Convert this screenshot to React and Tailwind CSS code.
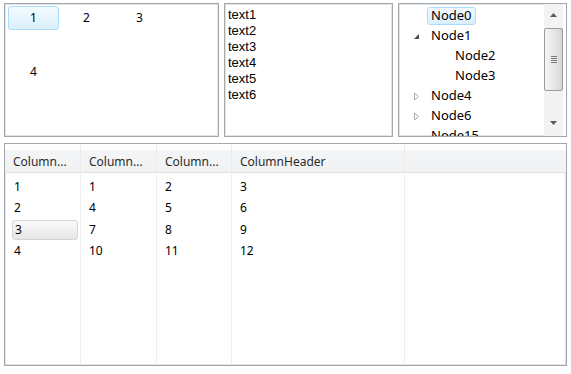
import React from "react";

const panel = "border border-[#a3a6ab] shadow-[inset_0_0_0_1px_#e2e3e5] bg-white overflow-hidden";

function SelBlue({ className = "", children }) {
  return (
    <div className={"rounded-[3px] border border-[#a9ddfa] bg-[linear-gradient(#f3fafe,#d9effc)] " + className}>
      {children}
    </div>
  );
}

function Expanded() {
  return (
    <svg width="7" height="7" viewBox="0 0 7 7">
      <polygon points="6,1 6,6 1,6" fill="#4a4a4a" />
    </svg>
  );
}

function Collapsed() {
  return (
    <svg width="7" height="9" viewBox="0 0 7 9">
      <polygon points="1.5,1 5.5,4.5 1.5,8" fill="none" stroke="#a8a8a8" strokeWidth="1" />
    </svg>
  );
}

function TreeRow({ level = 0, exp, label, sel }) {
  return (
    <div className="h-[20px] flex items-center whitespace-nowrap" style={{ paddingLeft: 14 + level * 24 }}>
      <div className="w-[14px] flex items-center justify-start">
        {exp === "open" && <Expanded />}
        {exp === "closed" && <Collapsed />}
      </div>
      {sel ? (
        <SelBlue className="h-[18px] px-[3px] flex items-center">{label}</SelBlue>
      ) : (
        <div className="h-[18px] px-[4px] flex items-center">{label}</div>
      )}
    </div>
  );
}

function Scrollbar() {
  return (
    <div className="w-[22px] pr-[3px] h-full flex flex-col bg-white">
      <div className="h-full flex flex-col bg-[#f3f3f3]">
        <div className="mt-[1px] h-[20px] flex items-center justify-center">
          <svg width="7" height="4" viewBox="0 0 7 4"><polygon points="0,4 3.5,0 7,4" fill="#5a5a5a" /></svg>
        </div>
        <div className="mt-[3px] h-[63px] rounded-[2px] border border-[#9a9a9a] bg-[linear-gradient(90deg,#f4f4f4,#e8e8e8_50%,#d6d6d6)] flex flex-col items-center justify-center gap-[1px]">
          <div className="w-[6px] h-[1px] bg-[#7a7a7a]" />
          <div className="w-[6px] h-[1px] bg-[#7a7a7a]" />
          <div className="w-[6px] h-[1px] bg-[#7a7a7a]" />
          <div className="w-[6px] h-[1px] bg-[#7a7a7a]" />
        </div>
        <div className="flex-1" />
        <div className="mb-[3px] h-[20px] flex items-center justify-center">
          <svg width="7" height="4" viewBox="0 0 7 4"><polygon points="0,0 7,0 3.5,4" fill="#5a5a5a" /></svg>
        </div>
      </div>
    </div>
  );
}

const cols = [
  { w: "w-[76px]", head: "Column...", vals: ["1", "2", "3", "4"], first: true },
  { w: "w-[76px]", head: "Column...", vals: ["1", "4", "7", "10"] },
  { w: "w-[75px]", head: "Column...", vals: ["2", "5", "8", "11"] },
  { w: "w-[173px]", head: "ColumnHeader", vals: ["3", "6", "9", "12"] },
];

export default function App() {
  return (
    <div
      className="w-[571px] h-[374px] bg-white flex flex-col pt-[3px] px-[4px] pb-[8px] gap-[6px] text-black"
      style={{ fontFamily: '"Noto Sans", "Open Sans", sans-serif' }}
    >
      <div className="flex h-[134px] gap-[5px]">
        {/* Large icon list */}
        <div className={panel + " w-[215px] text-[12px]"}>
          <div className="grid grid-cols-[53px_53px_53px] auto-rows-[54px] pl-[2px] pt-[2px]">
            {["1", "2", "3", "4"].map((n, i) => (
              <div key={n} className="flex justify-center">
                {i === 0 ? (
                  <SelBlue className="w-[51px] h-[24px] flex items-center justify-center">{n}</SelBlue>
                ) : (
                  <div className="w-[51px] h-[24px] flex items-center justify-center">{n}</div>
                )}
              </div>
            ))}
          </div>
        </div>
        {/* List box */}
        <div
          className={panel + " w-[169px] text-[13px] leading-[16px] pl-[3px] pt-[3px]"}
          style={{ fontFamily: '"Liberation Sans", Arial, sans-serif' }}
        >
          {["text1", "text2", "text3", "text4", "text5", "text6"].map((t) => (
            <div key={t}>{t}</div>
          ))}
        </div>
        {/* Tree view */}
        <div className={panel + " w-[169px] flex text-[13px]"}>
          <div className="flex-1 overflow-hidden pt-[2px]">
            <TreeRow label="Node0" sel />
            <TreeRow label="Node1" exp="open" />
            <TreeRow level={1} label="Node2" />
            <TreeRow level={1} label="Node3" />
            <TreeRow label="Node4" exp="closed" />
            <TreeRow label="Node6" exp="closed" />
            <TreeRow label="Node15" />
          </div>
          <Scrollbar />
        </div>
      </div>

      {/* Details list view */}
      <div className={panel + " flex-1 flex text-[12px]"}>
        {cols.map((c, ci) => (
          <div key={ci} className={c.w + " flex flex-col border-r border-[#ececec]"}>
            <div className="h-[29px] border-b border-[#dfe1e4] bg-[linear-gradient(#ffffff_0%,#ffffff_22%,#f4f5f7_23%,#f1f2f4_100%)] flex items-center pt-[7px] pl-[8px] text-[#2b2b2b] whitespace-nowrap">
              {c.head}
            </div>
            <div className="mt-[3px] flex flex-col">
              {c.vals.map((v, ri) => (
                <div key={ri} className="h-[21.5px] flex items-center">
                  {c.first ? (
                    ri === 2 ? (
                      <div className="ml-[7px] w-[66px] h-[20px] pl-[2px] flex items-center rounded-[3px] border border-[#d4d4d4] bg-[linear-gradient(#fafafa,#e6e6e6)]">
                        {v}
                      </div>
                    ) : (
                      <div className="pl-[9px]">{v}</div>
                    )
                  ) : (
                    <div className="pl-[8px]">{v}</div>
                  )}
                </div>
              ))}
            </div>
          </div>
        ))}
        <div className="flex-1 flex flex-col">
          <div className="h-[29px] border-b border-[#dfe1e4] bg-[linear-gradient(#ffffff_0%,#ffffff_22%,#f4f5f7_23%,#f1f2f4_100%)]" />
        </div>
      </div>
    </div>
  );
}
